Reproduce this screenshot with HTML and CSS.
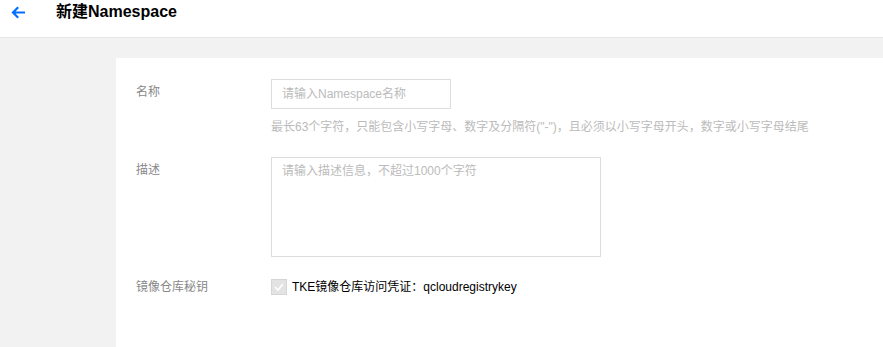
FILE: index.html
```html
<!DOCTYPE html>
<html lang="zh-CN">
<head>
<meta charset="utf-8">
<title>新建Namespace</title>
<link rel="stylesheet" href="styles.css">
</head>
<body>
<header class="topbar">
  <a class="back" href="#" aria-label="返回">
    <svg width="15" height="13" viewBox="0 0 15 13" class="back-icon">
      <path d="M14 6.5H2.2M7.2 1.3L2 6.5l5.2 5.2" fill="none" stroke="#006eff" stroke-width="2.2"/>
    </svg>
  </a>
  <h1 class="title">新建Namespace</h1>
</header>
<main class="content">
  <section class="card">
    <div class="form-row">
      <div class="form-label">名称</div>
      <div class="form-control">
        <input class="text-input" type="text" placeholder="请输入Namespace名称">
        <p class="hint">最长63个字符，只能包含小写字母、数字及分隔符("-")，且必须以小写字母开头，数字或小写字母结尾</p>
      </div>
    </div>
    <div class="form-row">
      <div class="form-label">描述</div>
      <div class="form-control">
        <textarea class="textarea" placeholder="请输入描述信息，不超过1000个字符"></textarea>
      </div>
    </div>
    <div class="form-row form-row-check">
      <div class="form-label">镜像仓库秘钥</div>
      <div class="form-control">
        <label class="check">
          <span class="check-box">
            <svg width="10" height="8" viewBox="0 0 10 8"><path d="M1 4l3 3 5-6" fill="none" stroke="#fff" stroke-width="1.6"/></svg>
          </span>
          <span class="check-text">TKE镜像仓库访问凭证：qcloudregistrykey</span>
        </label>
      </div>
    </div>
  </section>
</main>
</body>
</html>
```
FILE: styles.css
```css
html, body {
  margin: 0;
  padding: 0;
  height: 100%;
}
body {
  background: #f2f2f2;
  font-family: "Liberation Sans", "Noto Sans CJK SC", Arial, sans-serif;
  font-size: 12px;
  color: #333;
  overflow: hidden;
}
.topbar {
  height: 38px;
  box-sizing: border-box;
  background: #fff;
  border-bottom: 1px solid #e5e5e5;
  display: flex;
  align-items: flex-start;
  padding-top: 2px;
}
.back {
  display: flex;
  align-items: center;
  height: 20px;
  margin-left: 11px;
  width: 45px;
}
.back-icon {
  display: block;
}
.title {
  margin: 0;
  font-size: 16px;
  font-weight: bold;
  line-height: 20px;
  color: #000;
}
.content {
  padding: 20px 0 0 116px;
  height: calc(100% - 58px);
}
.card {
  background: #fff;
  padding: 21px 20px;
  height: 100%;
  box-sizing: border-box;
}
.form-row {
  display: grid;
  grid-template-columns: 135px 1fr;
  margin-bottom: 21px;
}
.form-label {
  color: #888;
  line-height: 18px;
  padding-top: 4px;
}
.form-row-check .form-label {
  padding-top: 0;
}
.form-control {
  min-width: 0;
}
.text-input {
  display: block;
  box-sizing: border-box;
  width: 180px;
  height: 30px;
  border: 1px solid #ddd;
  padding: 0 10px;
  font: inherit;
  font-size: 12px;
  color: #333;
  outline: none;
}
.text-input::placeholder,
.textarea::placeholder {
  color: #bbb;
}
.hint {
  margin: 9px 0 0;
  line-height: 18px;
  color: #bbb;
  white-space: nowrap;
}
.textarea {
  display: block;
  box-sizing: border-box;
  width: 330px;
  height: 100px;
  border: 1px solid #ddd;
  padding: 4px 10px;
  font: inherit;
  font-size: 12px;
  line-height: 18px;
  resize: none;
  outline: none;
}
.check {
  display: flex;
  align-items: center;
  height: 18px;
}
.check-box {
  width: 16px;
  height: 16px;
  box-sizing: border-box;
  background: #e3e3e3;
  border: 1px solid #d5d5d5;
  display: flex;
  align-items: center;
  justify-content: center;
  margin-right: 5px;
}
.check-box svg {
  display: block;
}
.check-text {
  color: #000;
  line-height: 18px;
}
```
